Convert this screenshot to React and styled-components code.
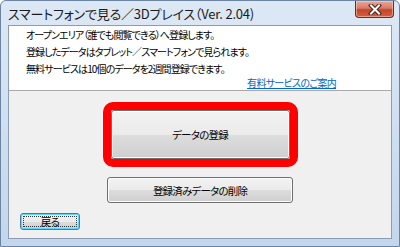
import React from "react";
import styled, { createGlobalStyle } from "styled-components";

const GlobalStyle = createGlobalStyle`
  html, body {
    margin: 0;
    padding: 0;
    background: #ffffff;
  }
  * {
    box-sizing: border-box;
  }
`;

const FONT = `"Noto Sans CJK JP", "Noto Sans", sans-serif`;

const Window = styled.div`
  width: 400px;
  height: 247px;
  display: flex;
  flex-direction: column;
  padding: 0 7px 7px;
  border: 1px solid #6b84a2;
  border-radius: 6px 6px 0 0;
  background: linear-gradient(180deg, #dde8f5 0%, #d2e1f2 40%, #c3d6ec 100%);
  font-family: ${FONT};
  font-feature-settings: "palt";
  color: #000;
`;

const TitleBar = styled.div`
  height: 24px;
  display: flex;
  justify-content: space-between;
  align-items: center;
  flex-shrink: 0;
`;

const Title = styled.div`
  font-size: 13px;
  color: #1a1a1a;
  letter-spacing: -0.2px;
  white-space: nowrap;
`;

const CloseButton = styled.div`
  align-self: flex-start;
  width: 39px;
  height: 17px;
  margin-right: -2px;
  border: 1px solid #6a2b20;
  border-top: none;
  border-radius: 0 0 4px 4px;
  background: linear-gradient(180deg, #e9a898 0%, #d77a66 45%, #c2452d 55%, #d3603f 100%);
  box-shadow: inset 0 0 0 1px rgba(255, 220, 210, 0.5);
  display: flex;
  align-items: center;
  justify-content: center;
`;

const Client = styled.div`
  flex: 1;
  display: flex;
  flex-direction: column;
  border: 1px solid #8a9db5;
  background: #f0f0f0;
`;

const Info = styled.div`
  height: 65px;
  background: #ffffff;
  border-bottom: 1px solid #a9a9a9;
  padding: 0 0 0 17px;
  font-size: 10px;
`;

const Line = styled.div`
  line-height: 17px;
  white-space: nowrap;
  letter-spacing: -0.9px;
`;

const LinkRow = styled.div`
  line-height: 11px;
  text-align: right;
  padding-right: 55px;
`;

const Link = styled.a`
  color: #0066cc;
  text-decoration: underline;
  font-size: 10px;
  letter-spacing: -0.7px;
  cursor: pointer;
`;

const Actions = styled.div`
  flex: 1;
  display: flex;
  flex-direction: column;
  align-items: center;
  padding-top: 19px;
`;

const Highlight = styled.div`
  position: relative;
  &::after {
    content: "";
    position: absolute;
    inset: -8px;
    border: 8px solid #ff0000;
    border-radius: 10px;
    pointer-events: none;
  }
`;

const Button = styled.button`
  width: ${(p) => p.$w}px;
  height: ${(p) => p.$h}px;
  display: flex;
  align-items: center;
  justify-content: center;
  padding: 0;
  border: 1px solid #707070;
  border-radius: 3px;
  background: linear-gradient(180deg, #f2f2f2 0%, #ebebeb 50%, #dddddd 51%, #cfcfcf 100%);
  box-shadow: inset 0 0 0 1px #fcfcfc;
  font-family: ${FONT};
  font-feature-settings: "palt";
  font-size: 10.5px;
  letter-spacing: -0.8px;
  color: #000;
`;

const DeleteButton = styled(Button)`
  margin-top: 18px;
`;

const BackButton = styled(Button)`
  position: relative;
  align-self: flex-start;
  margin: 10px 0 0 11px;
  border-color: #3c7fb1;
  box-shadow: inset 0 0 0 1px #5fd3fb;
  &::after {
    content: "";
    position: absolute;
    inset: 2px;
    border: 1px dotted #333;
    pointer-events: none;
  }
`;

const CloseIcon = () => (
  <svg width="14" height="11" viewBox="0 0 14 11">
    <path d="M3 1.5 L11 9.5 M11 1.5 L3 9.5" stroke="#4a2018" strokeWidth="4" strokeLinecap="square" />
    <path d="M3 1.5 L11 9.5 M11 1.5 L3 9.5" stroke="#ffffff" strokeWidth="2" strokeLinecap="square" />
  </svg>
);

export default function App() {
  return (
    <>
      <GlobalStyle />
      <Window>
        <TitleBar>
          <Title>スマートフォンで見る／3Dプレイス（Ver. 2.04)</Title>
          <CloseButton>
            <CloseIcon />
          </CloseButton>
        </TitleBar>
        <Client>
          <Info>
            <Line>オープンエリア（誰でも閲覧できる）へ登録します。</Line>
            <Line>登録したデータはタブレット／スマートフォンで見られます。</Line>
            <Line>無料サービスは10個のデータを2週間登録できます。</Line>
            <LinkRow>
              <Link>有料サービスのご案内</Link>
            </LinkRow>
          </Info>
          <Actions>
            <Highlight>
              <Button $w={179} $h={49}>データの登録</Button>
            </Highlight>
            <DeleteButton $w={186} $h={26}>登録済みデータの削除</DeleteButton>
            <BackButton $w={60} $h={17}>戻る</BackButton>
          </Actions>
        </Client>
      </Window>
    </>
  );
}
